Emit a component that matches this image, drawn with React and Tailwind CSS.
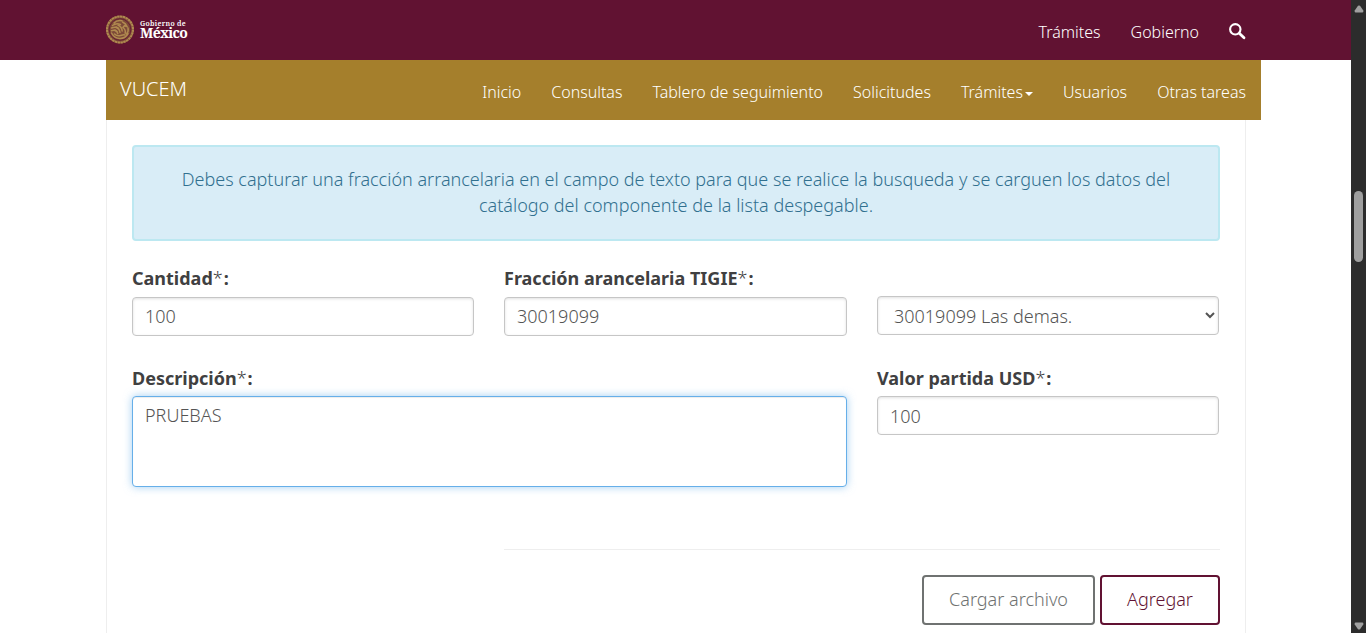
const font = "font-['Noto_Sans','Open_Sans',sans-serif]";

function Seal() {
  return (
    <svg viewBox="0 0 30 30" className="h-[30px] w-[30px] shrink-0" fill="none" stroke="#b08a50">
      <circle cx="15" cy="14.500" r="14" fill="#7d4a38" stroke="none" />
      <circle cx="15" cy="14.500" r="13" strokeWidth="2" strokeDasharray="2.400 0.500" />
      <circle cx="15" cy="14.500" r="10.800" strokeWidth="0.800" stroke="#611232" />
      <g strokeWidth="1.500" strokeLinecap="round">
        <path d="M9 8c2-2 5-2.800 8-2.200M7.500 10.500c2.500-1.800 5.500-2 8-1M6.500 13c2.500-1 5-1 7 .3M6.500 15.700c2-.6 4-.3 5.500.8" />
        <path d="M17.500 7c2 .8 3.800 2.500 4.500 4.500l-2.500-.8-1.500 1.800c1.800 1.400 2.700 3.500 2.200 5.800" />
        <path d="M13 10c2.200 1.200 4 3.200 4.200 6M11 12c2 1 3.700 3 4 5.500M9.800 15c1.500.8 2.600 2 3 3.500" />
        <path d="M23 13c.5 2.200 0 4.500-1.500 6M6.500 18c2 3.800 5.500 5.500 8.500 5.500s6.300-1.500 8-4.800" />
        <path d="M9.500 19c2 1.800 4 2 6 1.500s3-1 4.500-.5" />
      </g>
    </svg>
  );
}

function Label({ children }) {
  return (
    <label className="block h-[26px] text-[18px] leading-[26px] font-bold whitespace-nowrap text-[#404041]">
      {children}
      <span className="mr-px font-light">*</span>:
    </label>
  );
}

const control =
  "block w-full rounded-[4px] border border-[#c6c6c6] bg-white px-3 text-[18px] font-light text-[#545454] shadow-[inset_0_1px_3px_rgba(0,0,0,0.12)] outline-none";

function Arrow({ up }) {
  return (
    <svg viewBox="0 0 10 8" className="h-2 w-[10px]" fill="#a0a0a0">
      <path d={up ? "M4 .8Q5 0 6 .8L9.300 5.500Q9.700 7.500 8.500 7.500H1.500Q.3 7.500.7 5.500Z" : "M4 7.200Q5 8 6 7.200L9.300 2.500Q9.700.5 8.500.5H1.500Q.3.5.7 2.500Z"} />
    </svg>
  );
}

export default function App() {
  return (
    <div className={`flex h-[633px] w-[1366px] overflow-hidden bg-white ${font}`}>
      <div className="flex w-[1351px] flex-col">
        <header className="flex h-[60px] shrink-0 items-start bg-[#611232] pr-[105px] pl-[105px] text-white">
          <div className="flex items-start gap-[5px] pt-[15px]">
            <Seal />
            <div className="flex flex-col pt-[4px] font-['Noto_Serif','Liberation_Serif',serif]">
              <span className="text-[7px] leading-[9px] font-semibold tracking-[0.300px]">Gobierno de</span>
              <span className="text-[14px] leading-[10px] font-bold tracking-[-0.700px]">México</span>
            </div>
          </div>
          <nav className="ml-auto flex gap-[30px] text-[16px] leading-[24px] font-light">
            <a className="pt-[20px]">Trámites</a>
            <a className="pt-[20px]">Gobierno</a>
            <svg viewBox="0 0 17 17" className="mt-[23px] h-[17px] w-[17px]" fill="none" stroke="#fff">
              <circle cx="6.300" cy="6.300" r="5.200" strokeWidth="2.100" />
              <path d="M10.500 10.500L15 14.700" strokeWidth="2.800" strokeLinecap="round" />
            </svg>
          </nav>
        </header>

        <div className="ml-[106px] flex h-[60px] w-[1155px] shrink-0 items-start bg-[#a57f2c] pr-[15px] pl-[14px] text-white">
          <span className="pt-[15px] text-[20px] leading-[28px] font-light">VUCEM</span>
          <nav className="ml-auto flex gap-[30px] pt-[20px] text-[16px] leading-[24px] font-light whitespace-nowrap">
            <a>Inicio</a>
            <a>Consultas</a>
            <a>Tablero de seguimiento</a>
            <a>Solicitudes</a>
            <a className="flex items-center gap-[2px]">
              Trámites
              <span className="mt-[4px] h-0 w-0 border-x-4 border-t-4 border-x-transparent border-t-white" />
            </a>
            <a>Usuarios</a>
            <a>Otras tareas</a>
          </nav>
        </div>

        <main className="ml-[106px] flex w-[1140px] grow flex-col border-x border-[#eeeeee] px-[25px] pt-[25px]">
          <div className="h-[96px] w-[1088px] shrink-0 rounded-[4px] border-2 border-[#bce8f1] bg-[#d9edf7] px-[40px] pt-[19px] text-center text-[18px] leading-[26px] font-light text-[#31708f]">
            Debes capturar una fracción arrancelaria en el campo de texto para que se realice la busqueda y se carguen los datos del
            catálogo del componente de la lista despegable.
          </div>

          <div className="mt-[24px] grid shrink-0 grid-cols-[342px_343px_342px] gap-x-[30px]">
            <div>
              <Label>Cantidad</Label>
              <input className={`${control} mt-[6px] h-[39px] pb-[2px]`} defaultValue="100" />
            </div>
            <div>
              <Label>Fracción arancelaria TIGIE</Label>
              <input className={`${control} mt-[6px] h-[39px] pb-[2px]`} defaultValue="30019099" />
            </div>
            <div className="pt-[31px]">
              <select className={`${control} h-[39px] text-[#404041]`}>
                <option>30019099 Las demas.</option>
              </select>
            </div>
          </div>

          <div className="mt-[29px] grid shrink-0 grid-cols-[715px_342px] gap-x-[30px]">
            <div>
              <Label>Descripción</Label>
              <textarea
                className="mt-[5px] block h-[91px] w-full resize-none rounded-[4px] border border-[#66afe9] bg-white px-3 py-[5px] text-[18px] leading-[26px] font-light text-[#545454] shadow-[inset_0_1px_1px_rgba(0,0,0,0.075),0_0_8px_rgba(102,175,233,0.6)] outline-none"
                defaultValue="PRUEBAS"
              />
            </div>
            <div>
              <Label>Valor partida USD</Label>
              <input className={`${control} mt-[5px] h-[39px]`} defaultValue="100" />
            </div>
          </div>

          <div className="mt-[62px] ml-[372px] w-[716px] shrink-0 border-t border-[#eeeeee]" />
          <div className="mt-[25px] flex w-[1088px] shrink-0 justify-end gap-[5px] text-[18px] font-light">
            <button className="h-[50px] w-[173px] rounded-[4px] border-2 border-[#6f7271] pb-[2px] text-[#6f7271]">Cargar archivo</button>
            <button className="h-[50px] w-[120px] rounded-[4px] border-2 border-[#611232] pb-[2px] text-[#611232]">Agregar</button>
          </div>
        </main>
      </div>

      <div className="flex w-[15px] flex-col items-center bg-[#2c2c2c] pt-[5px] pb-[3px]">
        <Arrow up />
        <div className="mt-[178px] h-[71px] w-[9px] rounded-full bg-[#9f9f9f]" />
        <div className="mt-auto flex">
          <Arrow />
        </div>
      </div>
    </div>
  );
}
